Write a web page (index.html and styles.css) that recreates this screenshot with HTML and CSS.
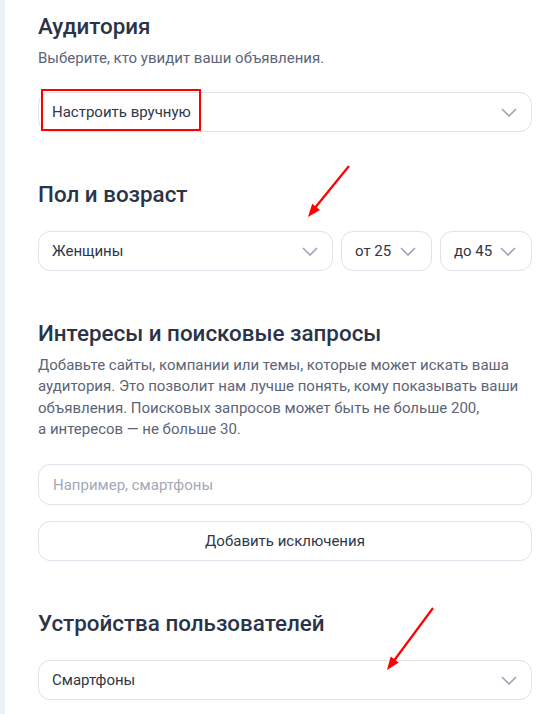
FILE: index.html
```html
<!DOCTYPE html>
<html lang="ru">
<head>
    <meta charset="UTF-8">
    <meta name="viewport" content="width=device-width, initial-scale=1.0">
    <title>Аудитория</title>
    <link rel="stylesheet" href="styles.css">
</head>
<body>
    <div class="side-strip"></div>
    <div class="settings">
        <section class="block block-first">
            <h2>Аудитория</h2>
            <p class="hint">Выберите, кто увидит ваши объявления.</p>
            <div class="select select-marked">
                <span>Настроить вручную</span>
                <svg class="chevron" width="16" height="9" viewBox="0 0 16 9"><path d="M1 1l7 7 7-7" fill="none" stroke="#9ba3b4" stroke-width="1.6"/></svg>
                <div class="mark"></div>
            </div>
        </section>

        <section class="block">
            <h2>Пол и возраст</h2>
            <svg class="arrow arrow-age" width="50" height="58" viewBox="0 0 50 58"><line x1="45" y1="2" x2="10" y2="45" stroke="#f00" stroke-width="2.2"/><polygon points="4,53 8.2,39.8 16,46" fill="#f00"/></svg>
            <div class="row">
                <div class="select select-gender">
                    <span>Женщины</span>
                    <svg class="chevron" width="16" height="9" viewBox="0 0 16 9"><path d="M1 1l7 7 7-7" fill="none" stroke="#9ba3b4" stroke-width="1.6"/></svg>
                </div>
                <div class="select select-age">
                    <span>от 25</span>
                    <svg class="chevron" width="16" height="9" viewBox="0 0 16 9"><path d="M1 1l7 7 7-7" fill="none" stroke="#9ba3b4" stroke-width="1.6"/></svg>
                </div>
                <div class="select select-age">
                    <span>до 45</span>
                    <svg class="chevron" width="16" height="9" viewBox="0 0 16 9"><path d="M1 1l7 7 7-7" fill="none" stroke="#9ba3b4" stroke-width="1.6"/></svg>
                </div>
            </div>
        </section>

        <section class="block">
            <h2>Интересы и поисковые запросы</h2>
            <p class="text">Добавьте сайты, компании или темы, которые может искать ваша аудитория. Это позволит нам лучше понять, кому показывать ваши объявления. Поисковых запросов может быть не больше 200, а&nbsp;интересов — не больше 30.</p>
            <input type="text" class="field" placeholder="Например, смартфоны">
            <button class="btn">Добавить исключения</button>
        </section>

        <section class="block">
            <h2>Устройства пользователей</h2>
            <svg class="arrow arrow-devices" width="56" height="68" viewBox="0 0 56 68"><line x1="51" y1="2" x2="11" y2="56" stroke="#f00" stroke-width="2.2"/><polygon points="5,64 8.7,50.6 16.7,56.6" fill="#f00"/></svg>
            <div class="select">
                <span>Смартфоны</span>
                <svg class="chevron" width="16" height="9" viewBox="0 0 16 9"><path d="M1 1l7 7 7-7" fill="none" stroke="#9ba3b4" stroke-width="1.6"/></svg>
            </div>
        </section>
    </div>
</body>
</html>
```

FILE: styles.css
```css
body {
    font-family: Roboto, "Liberation Sans", sans-serif;
    background-color: #fff;
    margin: 0;
    padding: 0;
    display: flex;
    min-height: 100vh;
    color: #2f3747;
}
.side-strip {
    width: 5px;
    background-color: #eef1f6;
    flex-shrink: 0;
}
.settings {
    width: 494px;
    padding-left: 33px;
}
.block {
    position: relative;
    padding-top: 48px;
}
.block-first {
    padding-top: 12px;
}
h2 {
    margin: 0;
    font-size: 22.4px;
    line-height: 28px;
    font-weight: 500;
    color: #2b3447;
}
.hint {
    margin: 8px 0 24px;
    font-size: 15px;
    line-height: 20px;
    color: #5c6477;
}
.text {
    margin: 8px 0 24px;
    font-size: 15px;
    line-height: 21.3px;
    color: #5c6477;
}
.select {
    position: relative;
    display: flex;
    align-items: center;
    justify-content: space-between;
    height: 40px;
    padding: 0 14px 0 13px;
    border: 1px solid #dfe2ea;
    border-radius: 12px;
    box-sizing: border-box;
    font-size: 15px;
    color: #2f3747;
    background: #fff;
}
.block .row,
.block > .select {
    margin-top: 23px;
}
.row {
    display: flex;
    gap: 8px;
}
.select-gender {
    width: 295px;
}
.select-age {
    width: 91px;
    padding-right: 15px;
}
.select-age:last-child {
    width: 92px;
}
.mark {
    position: absolute;
    left: 2px;
    top: -4px;
    width: 160px;
    height: 42px;
    border: 2px solid #f00;
    box-sizing: border-box;
}
.field {
    display: block;
    width: 100%;
    height: 41px;
    padding: 0 14px;
    border: 1px solid #dfe2ea;
    border-radius: 12px;
    box-sizing: border-box;
    font-family: inherit;
    font-size: 15px;
    color: #2f3747;
    outline: none;
}
.field::placeholder {
    color: #a3a9b8;
}
.btn {
    display: block;
    width: 100%;
    height: 40px;
    margin-top: 16px;
    border: 1px solid #dfe2ea;
    border-radius: 12px;
    background: #fff;
    font-family: inherit;
    font-size: 15px;
    color: #2f3747;
    cursor: pointer;
}
.arrow {
    position: absolute;
    z-index: 1;
}
.arrow-age {
    left: 266px;
    top: 32px;
}
.arrow-devices {
    left: 344px;
    top: 45px;
}
```
